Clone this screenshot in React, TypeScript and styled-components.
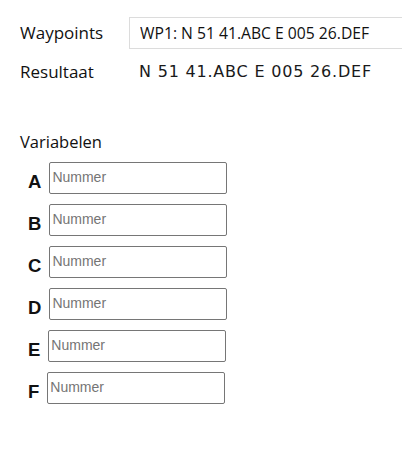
import React from 'react';
import styled, { createGlobalStyle } from 'styled-components';

const GlobalStyle = createGlobalStyle`
  body {
    margin: 0;
    background: #fff;
    color: #111;
    font-family: "Open Sans", "Noto Sans", sans-serif;
  }
`;

const Page = styled.div`
  padding: 17px 0 0 20px;
  overflow: hidden;
  width: 382px;
`;

const FieldGrid = styled.div`
  display: grid;
  grid-template-columns: 109px 1fr;
  row-gap: 7px;
  align-items: center;
`;

const Label = styled.div`
  font-size: 17px;
  line-height: 20px;
`;

const WaypointInput = styled.input`
  box-sizing: border-box;
  width: 300px;
  height: 32px;
  border: 1px solid #dcdcdc;
  padding: 0 10px;
  font-family: "Open Sans", "Noto Sans", sans-serif;
  font-size: 15.7px;
  color: #111;
  outline: none;
`;

const Result = styled.div`
  padding-left: 10px;
  font-family: "DejaVu Sans", Verdana, sans-serif;
  font-size: 16px;
  letter-spacing: 0.8px;
  color: #1a1a1a;
  line-height: 32px;
`;

const SectionTitle = styled.div`
  margin-top: 44px;
  font-size: 16.5px;
  line-height: 20px;
`;

const VarList = styled.div`
  display: flex;
  flex-direction: column;
  gap: 10px;
  margin-top: 10px;
  padding-left: 8px;
`;

const VarRow = styled.div`
  display: flex;
  align-items: center;
  font-family: "Liberation Sans", Arial, sans-serif;
`;

const Letter = styled.span`
  font-weight: bold;
  font-size: 18.5px;
  padding-top: 8px;
  margin-right: 8px;
`;

const NumberInput = styled.input`
  box-sizing: border-box;
  width: 178px;
  height: 32px;
  border: 1px solid #767676;
  border-radius: 2px;
  padding: 0 2px 2px;
  font-family: "Liberation Sans", Arial, sans-serif;
  font-size: 14px;
  &::placeholder {
    color: #757575;
  }
`;

const variables = ['A', 'B', 'C', 'D', 'E', 'F'];

export default function App() {
  return (
    <Page>
      <GlobalStyle />
      <FieldGrid>
        <Label>Waypoints</Label>
        <WaypointInput defaultValue="WP1: N 51 41.ABC E 005 26.DEF" />
        <Label>Resultaat</Label>
        <Result>N 51 41.ABC E 005 26.DEF</Result>
      </FieldGrid>
      <SectionTitle>Variabelen</SectionTitle>
      <VarList>
        {variables.map((v) => (
          <VarRow key={v}>
            <Letter>{v}</Letter>
            <NumberInput placeholder="Nummer" />
          </VarRow>
        ))}
      </VarList>
    </Page>
  );
}
